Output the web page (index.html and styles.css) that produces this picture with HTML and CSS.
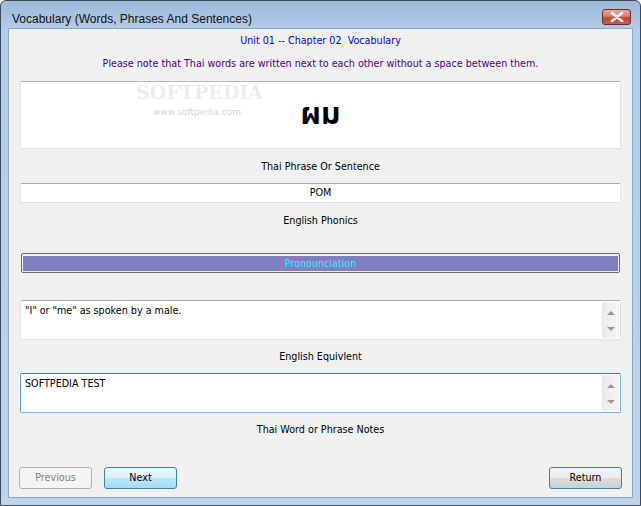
FILE: index.html
```html
<!DOCTYPE html>
<html>
<head>
    <title>Vocabulary (Words, Phrases And Sentences)</title>
    <link rel="stylesheet" href="styles.css">
</head>
<body>
    <div class="window">
        <div class="titlebar">
            <span class="title">Vocabulary (Words, Phrases And Sentences)</span>
            <div class="close">
                <svg width="14" height="10" viewBox="0 0 14 10"><path d="M2 1 L12 9 M12 1 L2 9" stroke="#fff" stroke-width="2.6" stroke-linecap="round"/><path d="M2 1 L12 9 M12 1 L2 9" stroke="#8a8a8a" stroke-width="0.6" fill="none" opacity="0.5"/></svg>
            </div>
        </div>

        <div class="client">
            <div class="unit">Unit 01 -- Chapter 02&nbsp; Vocabulary</div>
            <div class="note">Please note that Thai words are written next to each other without a space between them.</div>

            <div class="thaibox">ผม</div>
            <div class="label l1">Thai Phrase Or Sentence</div>

            <div class="phonics">POM</div>
            <div class="label l2">English Phonics</div>

            <div class="pron"><div class="pron-fill">Pronounciation</div></div>

            <div class="memo m1">
                <div class="memo-text">"I" or "me" as spoken by a male.</div>
                <div class="scroll"><span class="up"></span><span class="down"></span></div>
            </div>
            <div class="label l3">English Equivlent</div>

            <div class="memo m2 focused">
                <div class="memo-text">SOFTPEDIA TEST</div>
                <div class="scroll"><span class="up"></span><span class="down"></span></div>
            </div>
            <div class="label l4">Thai Word or Phrase Notes</div>

            <div class="buttons">
                <button type="button" class="btn disabled">Previous</button>
                <button type="button" class="btn next">Next</button>
                <button type="button" class="btn ret">Return</button>
            </div>

            <div class="wm">
                <div class="wm-big">SOFTPEDIA</div>
                <div class="wm-small">www.softpedia.com</div>
            </div>
        </div>
    </div>
</body>
</html>
```

FILE: styles.css
```css
html, body {margin:0;padding:0;background:#fff;}
body {font-family:"DejaVu Sans",Verdana,sans-serif;font-size:9.6px;color:#000;}

/* window frame */
.window {width:641px;height:506px;box-sizing:border-box;border:1px solid #3a4a5e;border-radius:6px 6px 0 0;background:linear-gradient(to bottom,#9cb9da 0,#b4cde8 30px,#bcd4ec 100%);display:flex;flex-direction:column;overflow:hidden;}
.titlebar {height:27px;display:flex;align-items:center;justify-content:space-between;padding:0 9px 0 11px;flex:none;}
.title {font-family:"Liberation Sans",Arial,sans-serif;font-size:12px;color:#111;margin-top:8px;}
.close {width:27px;height:14px;margin-top:4px;border:1px solid #6e3027;border-radius:3px;background:linear-gradient(to bottom,#e2a898 0,#d0806c 45%,#be4a32 55%,#c8604a 100%);display:flex;align-items:center;justify-content:center;}

.client {position:relative;flex:1;margin:0 7px 7px 7px;background:#f0f0f0;border:1px solid #8ea7c2;display:flex;flex-direction:column;padding:0 11px;}

.unit {color:#0000ff;text-align:center;line-height:14px;margin-top:5px;}
.note {color:#4b0082;text-align:center;line-height:14px;margin-top:9px;}
.label {text-align:center;line-height:14px;margin-top:11px;}
.l3, .l4 {margin-top:10px;}

.thaibox {margin-top:10px;height:68px;box-sizing:border-box;background:#fff;border:1px solid #dfe3e8;border-top-color:#b5b5b5;border-radius:2px;display:flex;align-items:center;justify-content:center;font-family:"Noto Sans Thai","Loma","Garuda","Norasi","DejaVu Sans",sans-serif;font-weight:bold;font-size:30px;color:#000;}

.phonics {margin-top:9px;height:20px;box-sizing:border-box;background:#fff;border:1px solid #e2e3ea;border-top-color:#abadb3;border-radius:2px;text-align:center;line-height:18px;}

.pron {margin:25px 1px 0 1px;height:20px;box-sizing:border-box;border:1px solid #6b6b6b;border-radius:2px;padding:2px 1px 1px 1px;background:#f0f0f0;}
.pron-fill {height:100%;background:#8080c0;color:#00ffff;text-align:center;line-height:15px;}

.memo {margin-top:27px;height:40px;box-sizing:border-box;background:#fff;border:1px solid #e2e3ea;border-top-color:#abadb3;border-radius:2px;display:flex;}
.memo.focused {margin-top:9px;border-color:#7eb4ea;border-top-color:#3d7bad;border-left-color:#569de5;}
.memo-text {flex:1;padding:3px 4px;line-height:13px;}
.scroll {width:17px;margin:1px 1px 1px 0;background:linear-gradient(to right,#ebebeb,#f5f5f5);border-left:1px solid #e6e6e6;display:flex;flex-direction:column;justify-content:space-between;align-items:center;padding:9px 0 7px 0;box-sizing:border-box;}
.up {width:0;height:0;border-left:4px solid transparent;border-right:4px solid transparent;border-bottom:4px solid #9a9a9a;}
.down {width:0;height:0;border-left:4px solid transparent;border-right:4px solid transparent;border-top:4px solid #9a9a9a;}

.buttons {margin-top:30px;display:flex;}
.btn {width:73px;height:22px;box-sizing:border-box;font-family:"DejaVu Sans",Verdana,sans-serif;font-size:9.6px;border-radius:3px;padding:0 0 1px 0;}
.btn.disabled {margin-left:-1px;border:1px solid #adb2b5;background:#f4f4f4;color:#838383;}
.btn.next {margin-left:12px;border:1px solid #3c7fb1;background:linear-gradient(to bottom,#eaf6fd 0,#d9f0fc 50%,#bee6fd 51%,#a7d9f5 100%);color:#000;}
.btn.ret {margin-left:auto;margin-right:-1px;border:1px solid #3c7fb1;background:linear-gradient(to bottom,#f2f2f2 0,#ebebeb 50%,#dddddd 51%,#cfcfcf 100%);color:#000;}

/* watermark */
.wm {position:absolute;left:127px;top:52px;width:122px;text-align:center;pointer-events:none;}
.wm-big {font-family:"DejaVu Serif",serif;font-weight:bold;font-size:19px;color:rgba(200,200,200,0.35);line-height:22px;}
.wm-small {font-family:"DejaVu Sans",sans-serif;font-size:9px;color:rgba(180,180,180,0.6);line-height:12px;margin-top:3px;}
```
